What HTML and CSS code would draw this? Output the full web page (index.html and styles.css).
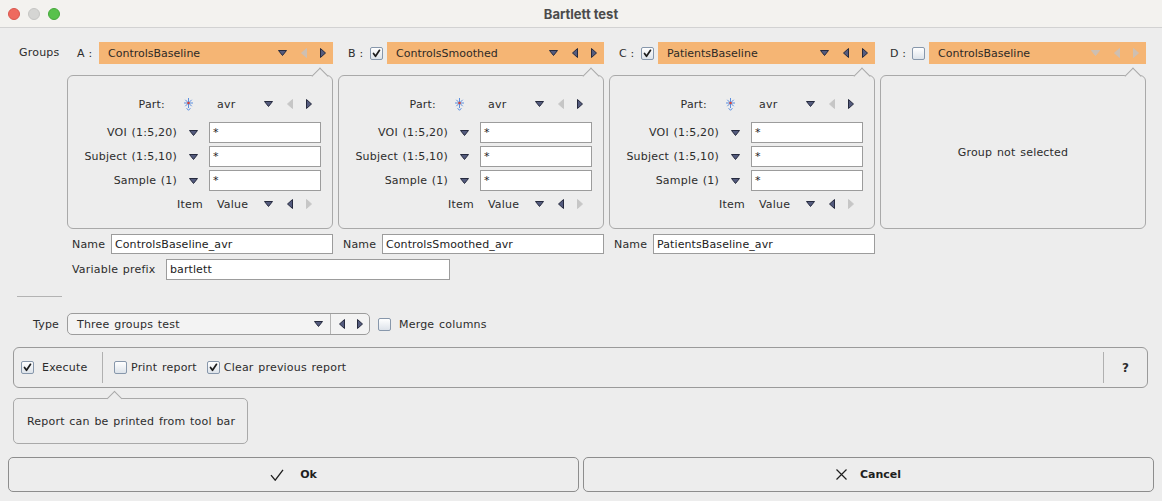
FILE: index.html
```html
<!DOCTYPE html>
<html>
<head>
<meta charset="utf-8">
<link rel="stylesheet" href="styles.css">
</head>
<body>
<div class="window">
  <div class="titlebar">
    <div class="lights"><span class="light red"></span><span class="light gray"></span><span class="light green"></span></div>
    <div class="title">Bartlett test</div>
    <div></div>
  </div>

  <div class="content">
    <div class="groups">
      <div class="glabel-main">Groups</div>

      <!-- headers -->
      <div class="ghead">
        <span class="glabel">A :</span>
        <div class="bar">
          <span class="btext">ControlsBaseline</span>
          <svg class="ic dn" width="9" height="6" viewBox="0 0 9 6"><path d="M.5.5h8L4.5 5.5z"/></svg>
          <svg class="ic lt off" width="6" height="10" viewBox="0 0 6 10"><path d="M5.5.5v9L.5 5z"/></svg>
          <svg class="ic rt" width="6" height="10" viewBox="0 0 6 10"><path d="M.5.5v9L5.5 5z"/></svg>
        </div>
      </div>
      <div class="ghead">
        <span class="glabel">B :</span>
        <span class="cb on"><svg viewBox="0 0 11 11"><path d="M2.5 5.5l2 2.8 4-6"/></svg></span>
        <div class="bar">
          <span class="btext">ControlsSmoothed</span>
          <svg class="ic dn" width="9" height="6" viewBox="0 0 9 6"><path d="M.5.5h8L4.5 5.5z"/></svg>
          <svg class="ic lt" width="6" height="10" viewBox="0 0 6 10"><path d="M5.5.5v9L.5 5z"/></svg>
          <svg class="ic rt" width="6" height="10" viewBox="0 0 6 10"><path d="M.5.5v9L5.5 5z"/></svg>
        </div>
      </div>
      <div class="ghead">
        <span class="glabel">C :</span>
        <span class="cb on"><svg viewBox="0 0 11 11"><path d="M2.5 5.5l2 2.8 4-6"/></svg></span>
        <div class="bar">
          <span class="btext">PatientsBaseline</span>
          <svg class="ic dn" width="9" height="6" viewBox="0 0 9 6"><path d="M.5.5h8L4.5 5.5z"/></svg>
          <svg class="ic lt" width="6" height="10" viewBox="0 0 6 10"><path d="M5.5.5v9L.5 5z"/></svg>
          <svg class="ic rt" width="6" height="10" viewBox="0 0 6 10"><path d="M.5.5v9L5.5 5z"/></svg>
        </div>
      </div>
      <div class="ghead">
        <span class="glabel">D :</span>
        <span class="cb"></span>
        <div class="bar">
          <span class="btext">ControlsBaseline</span>
          <svg class="ic dn off" width="9" height="6" viewBox="0 0 9 6"><path d="M.5.5h8L4.5 5.5z"/></svg>
          <svg class="ic lt off" width="6" height="10" viewBox="0 0 6 10"><path d="M5.5.5v9L.5 5z"/></svg>
          <svg class="ic rt off" width="6" height="10" viewBox="0 0 6 10"><path d="M.5.5v9L5.5 5z"/></svg>
        </div>
      </div>

      <!-- panels -->
      <div class="gpanel first">
        <div class="prow">
          <span class="plabel">Part:</span>
          <svg class="star" width="11" height="14" viewBox="0 0 11 14"><g stroke="#5b8fe0" stroke-width="1" fill="none"><path d="M5.5 1v10M1 6h9M2.3 2.8l6.4 6.4M8.7 2.8l-6.4 6.4"/><path d="M3.6 11.2l1.9 2.1 1.9-2.1"/></g><circle cx="5.5" cy="6" r="1.3" fill="#d9463b"/></svg>
          <span class="stext">avr</span>
          <svg class="ic dn" width="9" height="6" viewBox="0 0 9 6"><path d="M.5.5h8L4.5 5.5z"/></svg>
          <svg class="ic lt off" width="6" height="10" viewBox="0 0 6 10"><path d="M5.5.5v9L.5 5z"/></svg>
          <svg class="ic rt" width="6" height="10" viewBox="0 0 6 10"><path d="M.5.5v9L5.5 5z"/></svg>
        </div>
        <div class="frow top"><span class="flabel">VOI (1:5,20)</span><svg class="ic dn" width="9" height="6" viewBox="0 0 9 6"><path d="M.5.5h8L4.5 5.5z"/></svg><span class="inp fin">*</span></div>
        <div class="frow"><span class="flabel">Subject (1:5,10)</span><svg class="ic dn" width="9" height="6" viewBox="0 0 9 6"><path d="M.5.5h8L4.5 5.5z"/></svg><span class="inp fin">*</span></div>
        <div class="frow"><span class="flabel">Sample (1)</span><svg class="ic dn" width="9" height="6" viewBox="0 0 9 6"><path d="M.5.5h8L4.5 5.5z"/></svg><span class="inp fin">*</span></div>
        <div class="irow">
          <span class="ilabel">Item</span>
          <span class="stext">Value</span>
          <svg class="ic dn" width="9" height="6" viewBox="0 0 9 6"><path d="M.5.5h8L4.5 5.5z"/></svg>
          <svg class="ic lt" width="6" height="10" viewBox="0 0 6 10"><path d="M5.5.5v9L.5 5z"/></svg>
          <svg class="ic rt off" width="6" height="10" viewBox="0 0 6 10"><path d="M.5.5v9L5.5 5z"/></svg>
        </div>
      </div>
      <div class="gpanel">
        <div class="prow">
          <span class="plabel">Part:</span>
          <svg class="star" width="11" height="14" viewBox="0 0 11 14"><g stroke="#5b8fe0" stroke-width="1" fill="none"><path d="M5.5 1v10M1 6h9M2.3 2.8l6.4 6.4M8.7 2.8l-6.4 6.4"/><path d="M3.6 11.2l1.9 2.1 1.9-2.1"/></g><circle cx="5.5" cy="6" r="1.3" fill="#d9463b"/></svg>
          <span class="stext">avr</span>
          <svg class="ic dn" width="9" height="6" viewBox="0 0 9 6"><path d="M.5.5h8L4.5 5.5z"/></svg>
          <svg class="ic lt off" width="6" height="10" viewBox="0 0 6 10"><path d="M5.5.5v9L.5 5z"/></svg>
          <svg class="ic rt" width="6" height="10" viewBox="0 0 6 10"><path d="M.5.5v9L5.5 5z"/></svg>
        </div>
        <div class="frow top"><span class="flabel">VOI (1:5,20)</span><svg class="ic dn" width="9" height="6" viewBox="0 0 9 6"><path d="M.5.5h8L4.5 5.5z"/></svg><span class="inp fin">*</span></div>
        <div class="frow"><span class="flabel">Subject (1:5,10)</span><svg class="ic dn" width="9" height="6" viewBox="0 0 9 6"><path d="M.5.5h8L4.5 5.5z"/></svg><span class="inp fin">*</span></div>
        <div class="frow"><span class="flabel">Sample (1)</span><svg class="ic dn" width="9" height="6" viewBox="0 0 9 6"><path d="M.5.5h8L4.5 5.5z"/></svg><span class="inp fin">*</span></div>
        <div class="irow">
          <span class="ilabel">Item</span>
          <span class="stext">Value</span>
          <svg class="ic dn" width="9" height="6" viewBox="0 0 9 6"><path d="M.5.5h8L4.5 5.5z"/></svg>
          <svg class="ic lt" width="6" height="10" viewBox="0 0 6 10"><path d="M5.5.5v9L.5 5z"/></svg>
          <svg class="ic rt off" width="6" height="10" viewBox="0 0 6 10"><path d="M.5.5v9L5.5 5z"/></svg>
        </div>
      </div>
      <div class="gpanel">
        <div class="prow">
          <span class="plabel">Part:</span>
          <svg class="star" width="11" height="14" viewBox="0 0 11 14"><g stroke="#5b8fe0" stroke-width="1" fill="none"><path d="M5.5 1v10M1 6h9M2.3 2.8l6.4 6.4M8.7 2.8l-6.4 6.4"/><path d="M3.6 11.2l1.9 2.1 1.9-2.1"/></g><circle cx="5.5" cy="6" r="1.3" fill="#d9463b"/></svg>
          <span class="stext">avr</span>
          <svg class="ic dn" width="9" height="6" viewBox="0 0 9 6"><path d="M.5.5h8L4.5 5.5z"/></svg>
          <svg class="ic lt off" width="6" height="10" viewBox="0 0 6 10"><path d="M5.5.5v9L.5 5z"/></svg>
          <svg class="ic rt" width="6" height="10" viewBox="0 0 6 10"><path d="M.5.5v9L5.5 5z"/></svg>
        </div>
        <div class="frow top"><span class="flabel">VOI (1:5,20)</span><svg class="ic dn" width="9" height="6" viewBox="0 0 9 6"><path d="M.5.5h8L4.5 5.5z"/></svg><span class="inp fin">*</span></div>
        <div class="frow"><span class="flabel">Subject (1:5,10)</span><svg class="ic dn" width="9" height="6" viewBox="0 0 9 6"><path d="M.5.5h8L4.5 5.5z"/></svg><span class="inp fin">*</span></div>
        <div class="frow"><span class="flabel">Sample (1)</span><svg class="ic dn" width="9" height="6" viewBox="0 0 9 6"><path d="M.5.5h8L4.5 5.5z"/></svg><span class="inp fin">*</span></div>
        <div class="irow">
          <span class="ilabel">Item</span>
          <span class="stext">Value</span>
          <svg class="ic dn" width="9" height="6" viewBox="0 0 9 6"><path d="M.5.5h8L4.5 5.5z"/></svg>
          <svg class="ic lt" width="6" height="10" viewBox="0 0 6 10"><path d="M5.5.5v9L.5 5z"/></svg>
          <svg class="ic rt off" width="6" height="10" viewBox="0 0 6 10"><path d="M.5.5v9L5.5 5z"/></svg>
        </div>
      </div>
      <div class="gpanel empty">Group not selected</div>

      <!-- names -->
      <div class="nrow first"><span class="nlabel">Name</span><span class="inp nin">ControlsBaseline_avr</span></div>
      <div class="nrow"><span class="nlabel">Name</span><span class="inp nin">ControlsSmoothed_avr</span></div>
      <div class="nrow"><span class="nlabel">Name</span><span class="inp nin">PatientsBaseline_avr</span></div>
    </div>

    <div class="vrow"><span class="vlabel">Variable prefix</span><span class="inp vin">bartlett</span></div>

    <div class="sep"></div>

    <div class="trow">
      <span class="tlabel">Type</span>
      <div class="combo">
        <span class="ctext">Three groups test</span>
        <svg class="ic dn" width="9" height="6" viewBox="0 0 9 6"><path d="M.5.5h8L4.5 5.5z"/></svg>
        <span class="vdiv"></span>
        <svg class="ic lt" width="6" height="10" viewBox="0 0 6 10"><path d="M5.5.5v9L.5 5z"/></svg>
        <svg class="ic rt" width="6" height="10" viewBox="0 0 6 10"><path d="M.5.5v9L5.5 5z"/></svg>
      </div>
      <span class="cb merge"></span>
      <span class="mlabel">Merge columns</span>
    </div>

    <div class="exec">
      <span class="cb on"><svg viewBox="0 0 11 11"><path d="M2.5 5.5l2 2.8 4-6"/></svg></span>
      <span class="elabel">Execute</span>
      <span class="ediv"></span>
      <span class="cb pr"></span>
      <span class="clabel">Print report</span>
      <span class="cb on cl"><svg viewBox="0 0 11 11"><path d="M2.5 5.5l2 2.8 4-6"/></svg></span>
      <span class="clabel">Clear previous report</span>
      <span class="spacer"></span>
      <span class="ediv"></span>
      <span class="help">?</span>
    </div>

    <div class="tip">Report can be printed from tool bar</div>
  </div>

  <div class="footer">
    <div class="btn ok">
      <svg width="14" height="12" viewBox="0 0 14 12"><path d="M1 6.2l4.2 5L13 .8" fill="none" stroke="#1e1e1e" stroke-width="1.3"/></svg>
      <span>Ok</span>
    </div>
    <div class="btn cancel">
      <svg width="11" height="11" viewBox="0 0 11 11"><path d="M.5.5l10 10M10.5.5l-10 10" fill="none" stroke="#1e1e1e" stroke-width="1.2"/></svg>
      <span>Cancel</span>
    </div>
  </div>
</div>
</body>
</html>
```

FILE: styles.css
```css
* { box-sizing: border-box; }

body {
  margin: 0;
  font-family: "DejaVu Sans", sans-serif;
  font-size: 11px;
  letter-spacing: 0.2px;
  word-spacing: 1px;
  color: #2c2c2c;
  background: #ededed;
}

.window {
  width: 1162px;
  height: 501px;
  background: #ededed;
  overflow: hidden;
}

/* title bar */
.titlebar {
  height: 28px;
  background: #f3f2ef;
  border-bottom: 1px solid #d2d2d2;
  display: grid;
  grid-template-columns: 1fr auto 1fr;
  align-items: center;
}
.lights { display: flex; gap: 8px; padding-left: 8px; }
.light { width: 12px; height: 12px; border-radius: 50%; display: block; }
.light.red { background: #ee6a5f; border: 1px solid #d9574d; }
.light.gray { background: #d5d5d3; border: 1px solid #c6c6c4; }
.light.green { background: #58c14c; border: 1px solid #45a93a; }
.title {
  font-family: Inter, "DejaVu Sans", sans-serif;
  font-weight: 700;
  font-size: 13px;
  letter-spacing: 0;
  word-spacing: 0;
  color: #4b4b4b;
}

.content { padding: 14px 14px 0 13px; }

/* groups grid */
.groups {
  display: grid;
  grid-template-columns: 43px repeat(4, 266px);
  column-gap: 5px;
  margin-left: 6px;
}
.glabel-main { align-self: center; height: 22px; line-height: 22px; }

.ghead { display: flex; align-items: center; height: 22px; padding-left: 10px; }
.glabel { width: 15px; margin-right: 7px; white-space: nowrap; word-spacing: 0; }
.ghead .cb { margin-right: 4px; }

.bar {
  flex: 1;
  height: 22px;
  background: #f5b574;
  display: flex;
  align-items: center;
  padding: 0 7px 0 9px;
  color: #2e2a26;
}
.btext { flex: 1; letter-spacing: 0; }

/* icons */
.ic { display: block; flex: none; }
.ic path { fill: #545b7e; stroke: #262a3e; stroke-width: 1; stroke-linejoin: round; }
.ic.off path { fill: #c6c6c6; stroke: #c6c6c6; }
.bar .ic.off path { fill: #cdbfb2; stroke: #cdbfb2; }
.ic.lt { margin-left: 14px; }
.ic.rt { margin-left: 13px; }

/* checkbox */
.cb {
  width: 13px;
  height: 13px;
  flex: none;
  border: 1px solid #8797ab;
  border-radius: 2px;
  background: linear-gradient(#ffffff, #dde3ea);
  display: inline-flex;
  align-items: center;
  justify-content: center;
}
.cb svg { width: 11px; height: 11px; }
.cb path { fill: none; stroke: #1c1c1c; stroke-width: 1.7; stroke-linecap: round; stroke-linejoin: round; }

/* group panels */
.gpanel {
  position: relative;
  margin-top: 11px;
  height: 154px;
  border: 1px solid #a9a9a9;
  border-radius: 6px;
  padding-top: 18px;
}
.gpanel::before {
  content: "";
  position: absolute;
  top: -6px;
  right: 6px;
  width: 11px;
  height: 11px;
  background: #ededed;
  border-left: 1px solid #a9a9a9;
  border-top: 1px solid #a9a9a9;
  transform: rotate(45deg);
}
.gpanel.first { grid-column: 2; }
.gpanel.empty {
  display: flex;
  align-items: center;
  justify-content: center;
  padding-top: 0;
}

.prow { display: flex; align-items: center; height: 20px; }
.plabel { width: 97px; text-align: right; }
.star { display: block; margin-left: 18px; flex: none; }
.stext { width: 47px; flex: none; }
.prow .stext { margin-left: 23px; }

.frow { display: flex; align-items: center; height: 21px; margin-top: 3px; }
.frow.top { margin-top: 8px; }
.flabel { width: 109px; text-align: right; white-space: nowrap; }
.frow .ic.dn { margin-left: 12px; }

.inp {
  background: #ffffff;
  border: 1px solid #9c9c9c;
  display: flex;
  align-items: center;
  padding: 0 3px;
  color: #222;
  white-space: nowrap;
  letter-spacing: 0.1px;
}
.fin { width: 112px; height: 21px; margin-left: 11px; }

.irow { display: flex; align-items: center; height: 20px; margin-top: 3px; padding-left: 109px; }
.ilabel { width: 40px; }

.nrow { display: flex; align-items: center; height: 20px; margin-top: 5px; padding-left: 5px; }
.nrow.first { grid-column: 2; }
.nlabel { width: 33px; }
.nin { flex: 1; height: 20px; margin-left: 6px; }

.vrow { display: flex; align-items: center; height: 20px; margin: 5px 0 0 59px; }
.vlabel { width: 89px; white-space: nowrap; }
.vin { width: 284px; height: 21px; margin-left: 5px; }

.sep { width: 45px; height: 1px; background: #b3b3b3; margin: 17px 0 0 4px; }

/* type row */
.trow { display: flex; align-items: center; height: 22px; margin-top: 16px; }
.tlabel { width: 34px; margin-left: 20px; }
.combo {
  width: 303px;
  height: 22px;
  border: 1px solid #9c9c9c;
  border-radius: 5px;
  background: #f3f3f3;
  display: flex;
  align-items: center;
  padding: 0 6px 0 9px;
}
.ctext { flex: 1; }
.vdiv { width: 1px; align-self: stretch; background: #b4b4b4; margin-left: 7px; }
.combo .ic.lt { margin-left: 8px; }
.combo .ic.rt { margin-left: 12px; }
.cb.merge { margin-left: 8px; }
.mlabel { margin-left: 8px; }

/* execute panel */
.exec {
  margin-top: 12px;
  height: 41px;
  border: 1px solid #9a9a9a;
  border-radius: 6px;
  display: flex;
  align-items: center;
  padding-left: 7px;
}
.elabel { margin-left: 8px; width: 44px; white-space: nowrap; }
.ediv { width: 1px; height: 31px; background: #b0b0b0; margin-left: 16px; }
.spacer + .ediv { margin-left: 0; }
.cb.pr { margin-left: 11px; }
.cb.cl { margin-left: 10px; }
.clabel { margin-left: 4px; }
.spacer { flex: 1; }
.help { width: 43px; text-align: center; font-weight: 700; font-size: 12px; }

/* tooltip */
.tip {
  position: relative;
  margin-top: 10px;
  width: 235px;
  height: 46px;
  border: 1px solid #a9a9a9;
  border-radius: 5px;
  padding-left: 13px;
  display: flex;
  align-items: center;
}
.tip::before {
  content: "";
  position: absolute;
  top: -6px;
  left: 95px;
  width: 10px;
  height: 10px;
  background: #ededed;
  border-left: 1px solid #a9a9a9;
  border-top: 1px solid #a9a9a9;
  transform: rotate(45deg);
}

/* footer buttons */
.footer { display: flex; gap: 4px; padding: 0 8px; margin-top: 13px; }
.btn {
  flex: 1;
  height: 35px;
  border: 1px solid #8d8d8d;
  border-radius: 5px;
  display: flex;
  align-items: center;
  justify-content: center;
  font-weight: 700;
  letter-spacing: 0;
  color: #1e1e1e;
}
.btn.ok { gap: 16px; }
.btn.cancel { gap: 13px; }
.btn svg { display: block; }
```
